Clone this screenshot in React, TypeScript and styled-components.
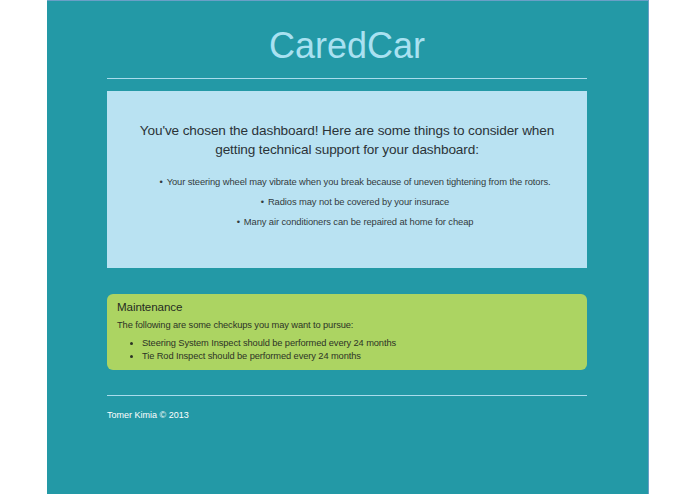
import React from 'react';
import styled, { createGlobalStyle } from 'styled-components';

const GlobalStyle = createGlobalStyle`
  html, body {
    margin: 0;
    padding: 0;
    background: #ffffff;
  }
  body {
    font-family: 'Liberation Sans', Arial, sans-serif;
  }
`;

const Page = styled.div`
  width: 601px;
  min-height: 493px;
  margin: 0 auto;
  background-color: #2399a6;
  border-top: 1px solid #6a9fc7;
  border-right: 1px solid #6a9fc7;
`;

const Container = styled.div`
  width: 480px;
  margin: 0 auto;
`;

const Title = styled.h1`
  margin: 0;
  padding-top: 24px;
  height: 53px;
  text-align: center;
  font-size: 36px;
  font-weight: 400;
  line-height: 42px;
  color: #a9e1f1;
`;

const Rule = styled.hr`
  margin: 0;
  border: 0;
  border-top: 1px solid #a9dcec;
`;

const Jumbotron = styled.section`
  margin-top: 12px;
  height: 177px;
  box-sizing: border-box;
  padding: 30px 20px 0;
  background-color: #b9e2f2;
  text-align: center;
  color: #2a3a40;
`;

const Lead = styled.h2`
  margin: 0 0 13px;
  font-size: 13.6px;
  font-weight: 400;
  letter-spacing: -0.12px;
  line-height: 19px;
  color: #2b3338;
`;

const CenterList = styled.ul`
  margin: 0;
  padding: 0 0 0 16px;
  list-style: none;
  font-size: 9.4px;
  letter-spacing: -0.1px;
  line-height: 20px;
  color: #333b40;

  li::before {
    content: '•';
    margin-right: 4px;
  }
`;

const Panel = styled.section`
  margin-top: 26px;
  padding: 5px 10px 7px;
  background-color: #acd462;
  border-radius: 6px;
  color: #2c3326;
`;

const PanelTitle = styled.h3`
  margin: 0 0 3px;
  font-size: 11.6px;
  font-weight: 400;
  letter-spacing: -0.1px;
  line-height: 16px;
  color: #262b22;
`;

const PanelText = styled.p`
  margin: 0 0 5px;
  font-size: 9.3px;
  letter-spacing: -0.1px;
  line-height: 14px;
`;

const CheckList = styled.ul`
  margin: 0;
  padding-left: 25px;
  font-size: 9.3px;
  letter-spacing: -0.1px;
  line-height: 13px;
`;

const FooterRule = styled(Rule)`
  margin-top: 25px;
`;

const Footer = styled.footer`
  padding-top: 13px;
  font-size: 9px;
  line-height: 12px;
  color: #ffffff;
`;

const tips = [
  'Your steering wheel may vibrate when you break because of uneven tightening from the rotors.',
  'Radios may not be covered by your insurace',
  'Many air conditioners can be repaired at home for cheap',
];

const checkups = [
  'Steering System Inspect should be performed every 24 months',
  'Tie Rod Inspect should be performed every 24 months',
];

const App = () => (
  <>
    <GlobalStyle />
    <Page>
      <Container>
        <Title>CaredCar</Title>
        <Rule />
        <Jumbotron>
          <Lead>
            You've chosen the dashboard! Here are some things to consider when
            getting technical support for your dashboard:
          </Lead>
          <CenterList>
            {tips.map((t) => (
              <li key={t}>{t}</li>
            ))}
          </CenterList>
        </Jumbotron>
        <Panel>
          <PanelTitle>Maintenance</PanelTitle>
          <PanelText>The following are some checkups you may want to pursue:</PanelText>
          <CheckList>
            {checkups.map((c) => (
              <li key={c}>{c}</li>
            ))}
          </CheckList>
        </Panel>
        <FooterRule />
        <Footer>Tomer Kimia © 2013</Footer>
      </Container>
    </Page>
  </>
);

export default App;
